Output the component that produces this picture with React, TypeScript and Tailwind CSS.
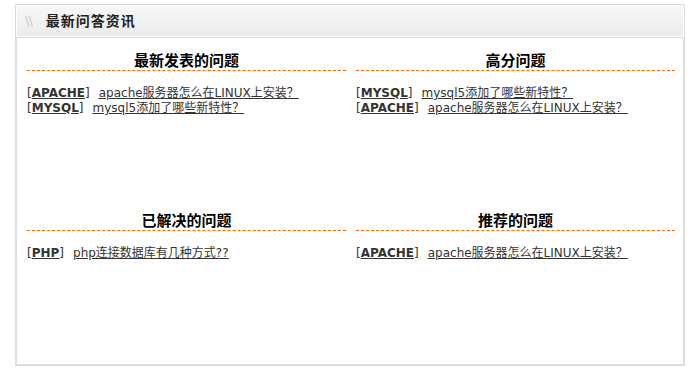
import React from "react";

type Item = { tag: string; text: string };
type Section = { title: string; items: Item[] };

const sections: Section[] = [
  {
    title: "最新发表的问题",
    items: [
      { tag: "APACHE", text: "apache服务器怎么在LINUX上安装？" },
      { tag: "MYSQL", text: "mysql5添加了哪些新特性？" },
    ],
  },
  {
    title: "高分问题",
    items: [
      { tag: "MYSQL", text: "mysql5添加了哪些新特性？" },
      { tag: "APACHE", text: "apache服务器怎么在LINUX上安装？" },
    ],
  },
  {
    title: "已解决的问题",
    items: [{ tag: "PHP", text: "php连接数据库有几种方式??" }],
  },
  {
    title: "推荐的问题",
    items: [{ tag: "APACHE", text: "apache服务器怎么在LINUX上安装？" }],
  },
];

const font = {
  fontFamily: '"DejaVu Sans", "Noto Sans CJK SC", sans-serif',
};

export default function App() {
  return (
    <div className="w-[690px] h-[368px] bg-white pl-[15px] pt-[4px]" style={font}>
      <div className="w-[670px]">
        <div className="h-[34px] border border-[#dcdcdc] bg-gradient-to-b from-[#f8f8f8] to-[#ebebeb] flex items-center">
          <div className="h-full w-full border border-white border-t-0 flex items-center">
            <span className="ml-[8px] text-[13px] text-[#c8c8c8] tracking-[-1px]">\\</span>
            <span
              className="ml-[14px] text-[14px] font-bold text-[#222] tracking-[1px]"
              style={{ fontFamily: '"Noto Sans CJK SC", sans-serif' }}
            >
              最新问答资讯
            </span>
          </div>
        </div>
        <div className="h-[328px] border-2 border-t-0 border-[#dedede] pl-[10px] pr-[8px] pt-[12px] grid grid-cols-2 gap-x-[10px] auto-rows-[160px] content-start">
          {sections.map((s) => (
            <div key={s.title} className="flex flex-col">
              <div
                className="h-[21px] leading-[20px] text-center text-[15px] font-bold text-black border-b border-dashed border-[#ff6600]"
                style={{ fontFamily: '"Noto Sans CJK SC", sans-serif' }}
              >
                {s.title}
              </div>
              <div className="mt-[15px] flex flex-col">
                {s.items.map((it, i) => (
                  <div key={i} className="h-[15px] leading-[15px] text-[12px] text-[#333] whitespace-nowrap">
                    <span>[</span>
                    <span className="font-bold underline">{it.tag}</span>
                    <span>]</span>
                    <span className="ml-[9px] underline">{it.text}</span>
                  </div>
                ))}
              </div>
            </div>
          ))}
        </div>
      </div>
    </div>
  );
}
